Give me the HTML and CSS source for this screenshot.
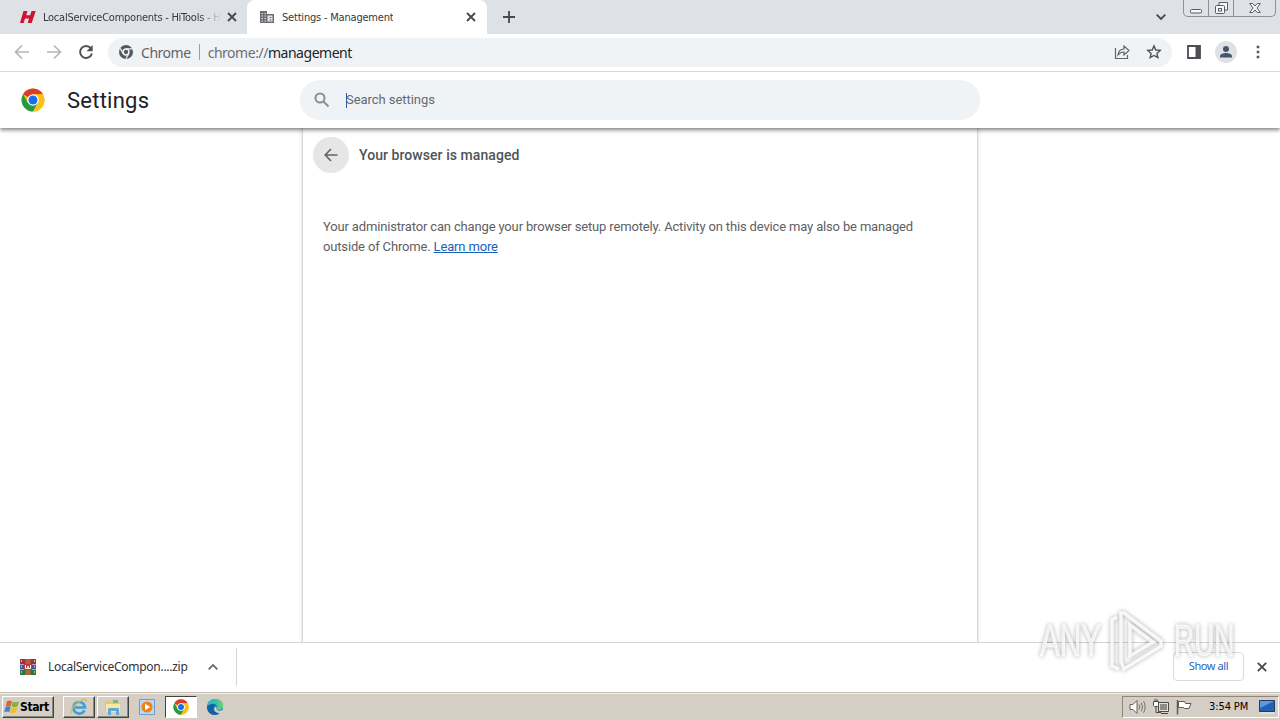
FILE: index.html
```html
<!DOCTYPE html>
<html lang="en">
<head>
    <meta charset="UTF-8">
    <title>Settings - Management</title>
    <link rel="stylesheet" href="styles.css">
</head>
<body>
<!-- shared logo -->
<svg class="defs">
    <symbol id="chrome" viewBox="0 0 48 48">
        <circle cx="24" cy="24" r="23" fill="#fbc116"/>
        <path d="M24 24 4.1 12.5A23 23 0 0 1 43.9 12.5H24z" fill="#dc3a2e"/>
        <path d="M4.1 12.5A23 23 0 0 0 24 47L34 29.7 24 24l-10 5.7z" fill="#249a48"/>
        <path d="M24 12.5h19.9A23 23 0 0 1 24 47l10-17.3z" fill="#fbc116"/>
        <circle cx="24" cy="24" r="11.5" fill="#fff"/>
        <circle cx="24" cy="24" r="9" fill="#1a6fe8"/>
    </symbol>
</svg>
<div class="screen">
    <div class="tabstrip">
        <div class="tab tab-first">
            <svg class="fav" width="16" height="16" viewBox="0 0 16 16"><path d="M3.5 2h4L6.2 6.3h4L11.5 2h4.200l-4 12h-4L9 9.500H5L3.700 14H0z" fill="#cf1330"/></svg>
            <span class="tab-title">LocalServiceComponents - HiTools - H</span>
            <svg class="close" width="10" height="10" viewBox="0 0 10 10"><path d="M1 1l8 8M9 1l-8 8"/></svg>
        </div>
        <div class="tab tab-active">
            <svg class="fav" width="14" height="14" viewBox="0 0 14 14"><path d="M0 1h7v3h7v9H0z" fill="#6b6e72"/><path d="M1.500 3h1.500v1H1.500zM4.500 3H6v1H4.500zM1.500 5.500h1.500v1H1.500zM4.500 5.500H6v1H4.500zM1.500 8h1.500v1H1.500zM4.500 8H6v1H4.500zM1.500 10.500h1.500v1H1.500zM4.500 10.500H6v1H4.500zM7.500 5.500h5v6h-5z" fill="#e5e6e8"/><path d="M9.500 7h2v1h-2zM9.500 9.500h2v1h-2z" fill="#6b6e72"/></svg>
            <span class="tab-title">Settings - Management</span>
            <svg class="close" width="10" height="10" viewBox="0 0 10 10"><path d="M1 1l8 8M9 1l-8 8"/></svg>
        </div>
        <svg class="new-tab" width="12" height="12" viewBox="0 0 12 12"><path d="M6 0v12M0 6h12"/></svg>
        <svg class="tab-menu" width="10" height="6" viewBox="0 0 10 6"><path d="M.7.7 5 5 9.300.7"/></svg>
        <div class="win-buttons">
            <span><svg width="12" height="14" viewBox="0 0 12 14"><rect x=".5" y="8.500" width="11" height="3.500" rx="1"/></svg></span>
            <span><svg width="13" height="14" viewBox="0 0 13 14"><path d="M4 4V1.500h8.500V9H10"/><rect x=".5" y="4.500" width="9" height="8" rx="1"/><rect x="3.500" y="7.500" width="3" height="2.500"/></svg></span>
            <span><svg width="12" height="12" viewBox="0 0 12 12"><path d="M.7 1.500h3L6 4l2.300-2.500h3L8 6l3.300 4.500h-3L6 8l-2.300 2.500h-3L4 6z"/></svg></span>
        </div>
    </div>

    <div class="toolbar">
        <svg class="nav" width="16" height="16" viewBox="0 0 16 16"><path d="M15 8H2M8 1.500 1.500 8 8 14.500"/></svg>
        <svg class="nav" width="16" height="16" viewBox="0 0 16 16"><path d="M1 8h13M8 1.500 14.500 8 8 14.500"/></svg>
        <svg class="reload" width="16" height="16" viewBox="0 0 16 16"><path d="M12.800 4.200A6 6 0 1 0 13.900 9.500" fill="none" stroke="#4f5358" stroke-width="2"/><path d="M14.700 1v6.200H8.500z" fill="#4f5358"/></svg>
        <div class="omnibox">
            <svg width="14" height="14" viewBox="0 0 14 14"><circle cx="7" cy="7" r="7" fill="#55595e"/><circle cx="7" cy="7" r="2.900" fill="#55595e" stroke="#f0f3f5" stroke-width="1.500"/><path d="M7 3.900h6.500M4.200 8.600 1.200 3.400M9.800 8.600 6.900 13.700" stroke="#f0f3f5" stroke-width="1.200"/></svg>
            <span class="origin">Chrome</span>
            <span class="divider"></span>
            <span class="url"><i>chrome://</i>management</span>
            <svg class="share" width="16" height="16" viewBox="0 0 16 16"><path d="M1.500 4v10.500h12V11" /><path d="M4 11c.3-4 2.300-5.800 6-6V2l5 4.500-5 4.500V8C7.500 8 5.500 9 4 11z"/></svg>
            <svg class="star" width="16" height="16" viewBox="0 0 16 16"><path d="M8 1.900l1.800 4.100 4.400.4-3.300 3 1 4.300L8 11.500l-3.900 2.200 1-4.300-3.300-3 4.400-.4z"/></svg>
        </div>
        <svg class="panel" width="14" height="14" viewBox="0 0 14 14"><path d="M1 1h12v12H1z" fill="#fff" stroke="#4c4f54" stroke-width="1.800"/><path d="M8.500 1H13v12H8.500z" fill="#4c4f54"/></svg>
        <svg class="avatar" width="22" height="22" viewBox="0 0 22 22"><circle cx="11" cy="11" r="11" fill="#dfe1e5"/><circle cx="11" cy="8" r="3" fill="#46546f"/><path d="M5 16.500v-1.300c0-2 3.500-3.200 6-3.200s6 1.200 6 3.200v1.300z" fill="#46546f"/></svg>
        <svg class="dots" width="4" height="14" viewBox="0 0 4 14"><path d="M.7.700h2.600v2.600H.7zM.7 5.700h2.600v2.600H.7zM.7 10.700h2.600v2.600H.7z" fill="#55585c"/></svg>
    </div>

    <div class="page">
        <div class="header">
            <svg class="logo" width="24" height="24"><use href="#chrome"/></svg>
            <h1>Settings</h1>
            <div class="search">
                <svg width="16" height="16" viewBox="0 0 16 16"><circle cx="6" cy="6" r="4.500"/><path d="M9.500 9.500l5 5"/></svg>
                <span class="caret"></span>
                <span class="hint">Search settings</span>
            </div>
        </div>
        <div class="main">
            <div class="card">
                <div class="card-head">
                    <span class="back"><svg width="14" height="14" viewBox="0 0 14 14"><path d="M13.500 7H1.500M7 1 1.200 7 7 13"/></svg></span>
                    <h2>Your browser is managed</h2>
                </div>
                <p>Your administrator can change your browser setup remotely. Activity on this device may also be managed<br>outside of Chrome. <a href="#">Learn more</a></p>
            </div>
        </div>
    </div>

    <div class="downloads">
        <svg class="zip" width="16" height="16" viewBox="0 0 16 16">
            <path d="M0 0h16v5H0z" fill="#a82d48"/><path d="M0 5.500h16v5H0z" fill="#3f55a5"/><path d="M0 11h16v5H0z" fill="#28764b"/>
            <path d="M5.500 0h5v16h-5z" fill="#b5652c"/><path d="M4 5h8v6H4z" fill="#c5333b"/>
            <path d="M5.500 6v3.500h2.500V7v2.500h2.500V6" fill="none" stroke="#fff"/>
            <path d="M1.500 1v14M14.500 1v14" stroke="#d4b86a" stroke-dasharray="2 3.500"/>
        </svg>
        <span class="file">LocalServiceCompon....zip</span>
        <svg class="up" width="10" height="6" viewBox="0 0 10 6"><path d="M.7 5.300 5 1l4.300 4.300"/></svg>
        <span class="sep"></span>
        <span class="show-all">Show all</span>
        <svg class="close" width="10" height="10" viewBox="0 0 10 10"><path d="M.8.800l8.400 8.400M9.200.8.800 9.200"/></svg>
    </div>

    <div class="taskbar">
        <div class="start">
            <svg width="16" height="16" viewBox="0 0 16 16">
                <path d="M3 2.200c2-1.200 3.500-.8 5 0L6.800 7.300c-1.600-.9-3.200-.9-5 0z" fill="#e2602b"/>
                <path d="M8.700 2.500c2 1 4 .9 6.300-.3l-1.400 5c-2 1.200-4 1.300-6 .4z" fill="#80b440"/>
                <path d="M1.600 8c1.800-1 3.400-.9 5 0l-1.300 5c-1.600-.8-3.200-.8-5 .1z" fill="#3f83c8"/>
                <path d="M7.300 8.400c2 1 4 .8 6.200-.3l-1.400 5c-2 1.200-4 1.200-6.100.3z" fill="#f0bd2e"/>
            </svg>
            <b>Start</b>
        </div>
        <div class="task raised">
            <svg width="18" height="18" viewBox="0 0 18 18">
                <path d="M14.500 12.200A5.800 5.800 0 1 1 15 9.500H5" fill="none" stroke="#3d9fdc" stroke-width="2.600"/>
                <path d="M2 15.500C-1 13 5 5 12 2c3-1.200 4.800-.7 4 2" fill="none" stroke="#e7bb3a" stroke-width="1.300"/>
            </svg>
        </div>
        <div class="task raised">
            <svg width="18" height="18" viewBox="0 0 18 18">
                <path d="M1 3h6l1 1.500h8V14H1z" fill="#e6c76b"/><path d="M2 6h14v8H2z" fill="#f7e7a0"/>
                <path d="M4 17v-6q0-1 1-1h9q1 0 1 1v6h-3v-4H7v4z" fill="#62a9d6"/><path d="M9 2h5v3H9z" fill="#7dba79"/>
            </svg>
        </div>
        <div class="task media">
            <svg width="16" height="16" viewBox="0 0 16 16">
                <path d="M.5.500h15v15H.5z" fill="#b9d7ef" stroke="#6e9fcc"/>
                <circle cx="8" cy="8" r="5.600" fill="#ee8318"/><path d="M6 4.800 11.200 8 6 11.200z" fill="#fff"/>
            </svg>
        </div>
        <div class="task pressed"><svg width="16" height="16"><use href="#chrome"/></svg></div>
        <div class="task edge">
            <svg width="16" height="16" viewBox="0 0 16 16">
                <circle cx="8" cy="8" r="8" fill="#1573bd"/>
                <path d="M.2 7C1 2.500 4.200 0 8 0c5 0 8 3.500 8 7 0 2.500-2 4-4.200 4-2 0-2.800-.8-2.300-1.700C11 6 7 2.500.2 7z" fill="#35bfb0"/>
                <path d="M9 0c4.500.3 7 3.500 7 7 0 2.500-2 4-4.200 4-1.500 0-2.500-.5-2.400-1.200C13 8 12 3 9 0z" fill="#5fcd72"/>
                <path d="M9.300 9.200C9 11.500 12 12.500 15.500 11l.5 1.500-2 2.500c-4 .5-8.300-2.500-6.500-6.500.7-1.300 2.500-1 1.800.7z" fill="#d5cec5"/>
                <path d="M.1 8C2 4.500 6.500 4.500 8 6.500 5 8 5.500 13 12.500 14.300 6 18 0 14 .1 8z" fill="#1261a8"/>
            </svg>
        </div>
        <div class="tray">
            <svg width="17" height="16" viewBox="0 0 17 16"><path d="M1 5.500h3l4-4v13l-4-4H1z" fill="#fff" stroke="#65615b"/><path d="M10 5.500q1.500 2.500 0 5M12.300 3.800q2.500 4.200 0 8.400M14.600 2.200q3 5.800 0 11.600" fill="none" stroke="#77736d"/></svg>
            <svg width="16" height="16" viewBox="0 0 16 16"><path d="M5.500 3.500h10v9h-10z" fill="#e4e2de" stroke="#4b4945"/><path d="M7 5h7v6H7z" fill="#8d8c88"/><path d="M8 14.500h7M3 8v5.500h5" stroke="#4b4945" fill="none"/><path d="M.5 2.500h5v4l-1 1h-3l-1-1zM2 0v2M4 0v2" fill="#fff" stroke="#4b4945"/></svg>
            <svg width="16" height="16" viewBox="0 0 16 16"><path d="M1.500 1v14.500" stroke="#5c5852" stroke-width="1.500"/><path d="M2.500 2.500h6l1 2h5.500l-2 5H8.500l-1-1h-5z" fill="#fff" stroke="#5c5852"/></svg>
            <span class="clock">3:54 PM</span>
            <svg class="desk" width="16" height="14" viewBox="0 0 16 14"><path d="M.5.500h15v11H.5z" fill="#2463b4" stroke="#24395c"/><path d="M1 1h14L1 8z" fill="#5c9bdf"/><path d="M1 13h14" stroke="#e9f0f8"/></svg>
        </div>
    </div>

    <div class="watermark">
        <span>ANY</span>
        <svg width="58" height="66" viewBox="0 0 58 66"><path d="M9 9 4 12v46l7 3M13 5v48l3 8 37-23v-5L16 5zM22 17v31l23-14z"/></svg>
        <span>RUN</span>
    </div>
</div>
</body>
</html>
```

FILE: styles.css
```css
*{
    margin:0;
    padding:0;
    box-sizing:border-box;
}
body{
    font-family:Roboto, sans-serif;
    overflow:hidden;
}
svg{
    display:block;
    flex:none;
}
.defs{
    position:absolute;
    width:0;
    height:0;
}
.screen{
    position:relative;
    width:1280px;
    height:720px;
    display:flex;
    flex-direction:column;
    background:#fff;
}

/* tabs */
.tabstrip{
    height:34px;
    display:flex;
    align-items:center;
    background:#dee1e6;
    font-family:"DejaVu Sans Condensed", "DejaVu Sans", sans-serif;
    font-size:11px;
    color:#36393d;
}
.tab{
    height:34px;
    display:flex;
    align-items:center;
}
.tab-first{
    width:247px;
    padding:0 10px 0 20px;
}
.tab-first .tab-title{
    width:178px;
    margin-left:7px;
    letter-spacing:-.25px;
    -webkit-mask-image:linear-gradient(90deg, #000 88%, transparent);
}
.tab-title{
    overflow:hidden;
    white-space:nowrap;
    letter-spacing:-.2px;
}
.tab .close{
    margin-left:auto;
}
.tab-active{
    width:240px;
    padding:0 11px 0 13px;
    background:#fff;
    border-radius:8px 8px 0 0;
}
.tab-active .tab-title{
    margin-left:8px;
}
.close, .new-tab, .tab-menu{
    fill:none;
    stroke:#45484c;
    stroke-width:1.8;
}
.new-tab{
    margin-left:16px;
}
.tab-menu{
    margin-left:641px;
}
.win-buttons{
    display:flex;
    align-self:flex-start;
    width:93px;
    height:17px;
    margin-left:17px;
    border:1px solid #8c9097;
    border-top:0;
    border-radius:0 0 5px 5px;
}
.win-buttons span{
    width:25px;
    display:flex;
    align-items:center;
    justify-content:center;
    border-right:1px solid #8c9097;
}
.win-buttons span:last-child{
    width:41px;
    border:0;
}
.win-buttons svg{
    fill:#f5f6f8;
    stroke:#595d64;
}

/* address bar */
.toolbar{
    height:38px;
    display:flex;
    align-items:center;
    padding:0 20px 1px 14px;
    border-bottom:1px solid #d9dadc;
}
.nav{
    margin-right:16px;
    fill:none;
    stroke:#b4b6b9;
    stroke-width:1.7;
}
.omnibox{
    width:1064px;
    height:29px;
    margin-left:14px;
    padding:0 10px 0 11px;
    display:flex;
    align-items:center;
    background:#f0f3f5;
    border-radius:15px;
    font-family:"Noto Sans", sans-serif;
    font-size:14px;
    letter-spacing:-.47px;
    color:#202327;
}
.origin{
    margin-left:8px;
    color:#5f6368;
}
.divider{
    width:1px;
    height:16px;
    margin:0 8px;
    background:#9a9da1;
}
.url i{
    font-style:normal;
    color:#6b6f74;
}
.share{
    margin-left:auto;
    margin-right:16px;
    fill:none;
    stroke:#5f6368;
    stroke-width:1.2;
}
.star{
    fill:none;
    stroke:#4f5358;
    stroke-width:1.4;
}
.panel{
    margin-left:15px;
}
.avatar{
    margin-left:14px;
}
.dots{
    margin-left:19px;
}

/* settings page */
.page{
    flex:1;
    display:flex;
    flex-direction:column;
    overflow:hidden;
}
.header{
    position:relative;
    height:56px;
    display:flex;
    align-items:center;
    padding-left:21px;
    background:#fff;
    box-shadow:0 2px 4px rgba(0,0,0,.5);
}
h1{
    width:233px;
    margin-left:22px;
    font-size:22px;
    font-weight:400;
    letter-spacing:.25px;
    color:#202124;
}
.search{
    width:680px;
    height:40px;
    display:flex;
    align-items:center;
    padding-left:14px;
    background:#f0f3f5;
    border-radius:20px;
    font-size:13px;
    color:#656a70;
}
.search svg{
    fill:none;
    stroke:#8a8e93;
    stroke-width:2;
}
.caret{
    width:1px;
    height:15px;
    margin-left:16px;
    margin-right:-1px;
    background:#2f5aa8;
}
.hint{
    padding-bottom:2px;
    letter-spacing:-.05px;
}
.main{
    flex:1;
    display:flex;
    justify-content:center;
}
.card{
    width:674px;
    padding:9px 10px;
    box-shadow:0 0 2px rgba(60,64,67,.35), 0 1px 4px 1px rgba(60,64,67,.17);
}
.card-head{
    display:flex;
    align-items:center;
}
.back{
    width:36px;
    height:36px;
    display:flex;
    align-items:center;
    justify-content:center;
    background:#e6e6e6;
    border-radius:50%;
}
.back svg{
    fill:none;
    stroke:#5f6368;
    stroke-width:1.6;
}
h2{
    margin-left:10px;
    font-size:14px;
    font-weight:500;
    letter-spacing:.06px;
    color:#505356;
}
.card p{
    margin:44px 0 0 10px;
    font-size:13px;
    line-height:20px;
    letter-spacing:-.157px;
    color:#5f6062;
    white-space:nowrap;
}
.card a{
    color:#1a5fb8;
}

/* download shelf */
.downloads{
    height:50px;
    display:flex;
    align-items:center;
    padding:0 13px 1px 20px;
    border-top:1px solid #d3d4d6;
    font-family:"Noto Sans", sans-serif;
    font-size:12px;
    color:#303236;
}
.file{
    width:140px;
    margin-left:12px;
    padding-bottom:2px;
    letter-spacing:-.27px;
    white-space:nowrap;
}
.up{
    margin-left:20px;
    fill:none;
    stroke:#5f6368;
    stroke-width:1.7;
}
.sep{
    width:1px;
    height:38px;
    margin-left:18px;
    background:#d3d4d6;
}
.show-all{
    width:71px;
    height:29px;
    margin-left:auto;
    margin-right:13px;
    margin-bottom:2px;
    border:1px solid #d9dbdf;
    border-radius:4px;
    font-size:11px;
    line-height:26px;
    letter-spacing:-.4px;
    text-align:center;
    color:#1967c0;
}

/* taskbar */
.taskbar{
    height:28px;
    display:flex;
    align-items:center;
    padding:2px 1px 2px 2px;
    background:#d5cec5;
    border-top:1px solid #c4beb5;
    box-shadow:inset 0 1px #f2efeb;
    font-family:"DejaVu Sans Condensed", "DejaVu Sans", sans-serif;
    font-size:11px;
    color:#000;
}
.start, .raised{
    border:1px solid;
    border-color:#fff #45423e #45423e #fff;
    box-shadow:inset -1px -1px #8c867d;
}
.start{
    width:52px;
    height:22px;
    margin-right:9px;
    padding-left:1px;
    display:flex;
    align-items:center;
}
.start b{
    font-size:12px;
    letter-spacing:-.4px;
}
.task{
    width:32px;
    height:22px;
    margin-right:2px;
    display:flex;
    align-items:center;
    justify-content:center;
}
.pressed{
    background:#fff;
    border:1px solid;
    border-color:#45423e #fff #fff #45423e;
}
.tray{
    width:157px;
    height:22px;
    margin-left:auto;
    padding-left:6px;
    display:flex;
    align-items:center;
    gap:8px;
    border:1px solid;
    border-color:#8c867d #fff #fff #8c867d;
}
.tray svg{
    margin-right:-1px;
}
.clock{
    width:42px;
    margin-left:10px;
    letter-spacing:-.1px;
    white-space:nowrap;
}

/* recording stamp over the desktop */
.watermark{
    position:absolute;
    left:1040px;
    top:608px;
    display:flex;
    align-items:center;
    gap:6px;
    font-family:"Liberation Sans", sans-serif;
    font-size:45px;
    line-height:66px;
    color:rgba(255,255,255,.75);
    -webkit-text-stroke:1px rgba(255,255,255,.75);
    filter:drop-shadow(0 0 2px rgba(0,0,0,.4));
}
.watermark span{
    width:62px;
    transform:scaleX(.66);
    transform-origin:left;
}
.watermark span:last-child{
    margin-left:2px;
    transform:scaleX(.62);
}
.watermark svg{
    fill:none;
    stroke:rgba(255,255,255,.85);
    stroke-width:3.5;
}
```
